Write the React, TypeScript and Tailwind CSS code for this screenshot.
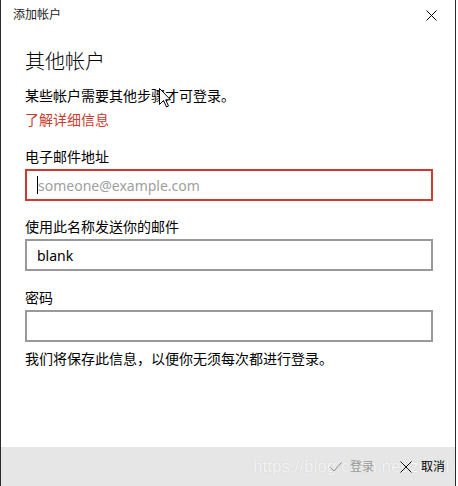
import React from "react";

const font = "font-['Noto_Sans','Noto_Sans_CJK_SC',sans-serif]";

function Field({
  label,
  value,
  placeholder,
  error,
  caret,
  labelClass,
}: {
  label: string;
  value?: string;
  placeholder?: string;
  error?: boolean;
  caret?: boolean;
  labelClass: string;
}) {
  return (
    <div className={labelClass}>
      <div className="text-[14px] leading-[20px] text-black">{label}</div>
      <div
        className={`mt-[2px] h-[32px] w-[408px] border-2 flex items-center pl-[10px] text-[14px] ${
          error ? "border-[#cd3a2f]" : "border-[#999999]"
        }`}
      >
        {caret && <span className="w-px h-[18px] bg-black" />}
        {value ? (
          <span className="text-black">{value}</span>
        ) : (
          <span className="text-[#a0a0a0]">{placeholder}</span>
        )}
      </div>
    </div>
  );
}

export default function App() {
  return (
    <div className={`relative w-[458px] h-[486px] bg-white ${font}`}>
      <div className="w-[456px] h-[486px] border-x border-[#2b2b2b] flex flex-col">
        {/* title bar */}
        <div className="h-[30px] flex items-center justify-between pl-[12px] pr-[18px]">
          <span className="text-[12px] text-[#222]">添加帐户</span>
          <svg width="11" height="11" viewBox="0 0 11 11" className="text-black">
            <path d="M0.5 0.5 L10.5 10.5 M10.5 0.5 L0.5 10.5" stroke="currentColor" strokeWidth="1" />
          </svg>
        </div>

        {/* body */}
        <div className="flex flex-col px-[24px]">
          <h1 className="mt-[18px] text-[20px] leading-[28px] font-light text-black">其他帐户</h1>
          <p className="mt-[10px] text-[14px] leading-[20px] text-black">某些帐户需要其他步骤才可登录。</p>
          <a className="mt-[4px] text-[14px] leading-[20px] text-[#cd3a2f]">了解详细信息</a>
          <Field
            labelClass="mt-[17px]"
            label="电子邮件地址"
            placeholder="someone@example.com"
            error
            caret
          />
          <Field labelClass="mt-[16px]" label="使用此名称发送你的邮件" value="blank" />
          <Field labelClass="mt-[17px]" label="密码" />
          <p className="mt-[7px] text-[14px] leading-[20px] text-black">
            我们将保存此信息，以便你无须每次都进行登录。
          </p>
        </div>

        {/* footer */}
        <div className="relative mt-auto h-[39px] bg-[#e6e6e6] flex items-center justify-end pr-[10px] gap-[10px] text-[12px]">
          {/* blog watermark stamped across the footer */}
          <span className="absolute left-[252px] top-[9px] text-[17px] leading-[22px] text-[#f4f4f4] font-['Liberation_Sans',sans-serif] [text-shadow:0_0_1px_#c4c4c4]">
            https://blog.csdn.net/zocdl
          </span>
          <div className="relative flex items-center gap-[8px] text-[#9a9a9a]">
            <svg width="12" height="10" viewBox="0 0 12 10">
              <path d="M0.5 5.5 L4 9 L11.5 0.5" fill="none" stroke="#8a8a8a" strokeWidth="1" />
            </svg>
            <span>登录</span>
          </div>
          <div className="relative flex items-center gap-[9px] text-black ml-[16px]">
            <svg width="12" height="12" viewBox="0 0 12 12">
              <path d="M0.5 0.5 L11.5 11.5 M11.5 0.5 L0.5 11.5" stroke="#111" strokeWidth="1" />
            </svg>
            <span>取消</span>
          </div>
        </div>
      </div>

      {/* pointer cursor */}
      <svg
        className="absolute left-[159px] top-[88px]"
        width="13"
        height="20"
        viewBox="0 0 13 20"
      >
        <path
          d="M0.5 0.5 L0.5 16.5 L4.5 12.5 L7.5 19 L9.5 18 L6.7 11.8 L11.5 11.8 Z"
          fill="white"
          stroke="black"
          strokeWidth="1"
          strokeLinejoin="miter"
        />
      </svg>
    </div>
  );
}
